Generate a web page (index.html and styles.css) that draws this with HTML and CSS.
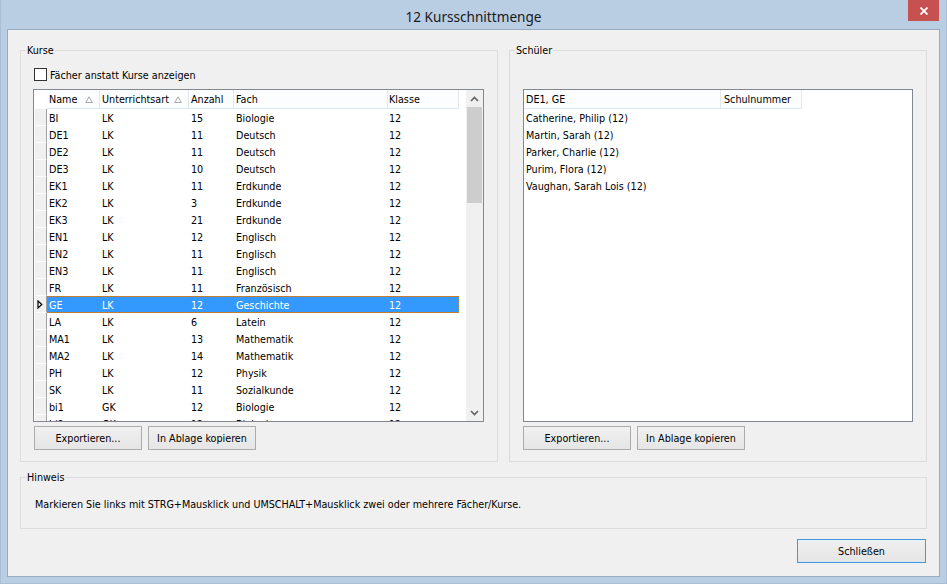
FILE: index.html
```html
<!DOCTYPE html>
<html lang="de">
<head>
<meta charset="utf-8">
<title>12 Kursschnittmenge</title>
<link rel="stylesheet" href="styles.css">
</head>
<body>
<div class="window">
  <div class="titlebar">
    <span class="title">12 Kursschnittmenge</span>
    <div class="close"><svg width="8" height="8" viewBox="0 0 8 8"><path d="M0.5 0.5 L7.5 7.5 M7.5 0.5 L0.5 7.5" stroke="#fff" stroke-width="1.8" fill="none"/></svg></div>
  </div>
  <div class="client">
    <div class="groups">
      <div class="group kurse">
        <div class="group-title">Kurse</div>
        <div class="group-body">
          <label class="check"><span class="box"></span><span class="check-label">Fächer anstatt Kurse anzeigen</span></label>
          <div class="grid">
            <div class="grid-body">
              <div class="hdr">
                <div class="ind-h"></div>
                <div class="hc c-name">Name<svg class="sort" width="8" height="7" viewBox="0 0 8 7"><path d="M4 0.8 L7.3 6.5 L0.7 6.5 Z" fill="none" stroke="#a8a8a8" stroke-width="1"/></svg></div>
                <div class="hc c-art">Unterrichtsart<svg class="sort" width="8" height="7" viewBox="0 0 8 7"><path d="M4 0.8 L7.3 6.5 L0.7 6.5 Z" fill="none" stroke="#a8a8a8" stroke-width="1"/></svg></div>
                <div class="hc c-anz">Anzahl</div>
                <div class="hc c-fach">Fach</div>
                <div class="hc c-kl">Klasse</div>
              </div>
              <div class="row"><div class="ind"></div><div class="cells"><div class="c c-name">BI</div><div class="c c-art">LK</div><div class="c c-anz">15</div><div class="c c-fach">Biologie</div><div class="c c-kl">12</div></div></div>
              <div class="row"><div class="ind"></div><div class="cells"><div class="c c-name">DE1</div><div class="c c-art">LK</div><div class="c c-anz">11</div><div class="c c-fach">Deutsch</div><div class="c c-kl">12</div></div></div>
              <div class="row"><div class="ind"></div><div class="cells"><div class="c c-name">DE2</div><div class="c c-art">LK</div><div class="c c-anz">11</div><div class="c c-fach">Deutsch</div><div class="c c-kl">12</div></div></div>
              <div class="row"><div class="ind"></div><div class="cells"><div class="c c-name">DE3</div><div class="c c-art">LK</div><div class="c c-anz">10</div><div class="c c-fach">Deutsch</div><div class="c c-kl">12</div></div></div>
              <div class="row"><div class="ind"></div><div class="cells"><div class="c c-name">EK1</div><div class="c c-art">LK</div><div class="c c-anz">11</div><div class="c c-fach">Erdkunde</div><div class="c c-kl">12</div></div></div>
              <div class="row"><div class="ind"></div><div class="cells"><div class="c c-name">EK2</div><div class="c c-art">LK</div><div class="c c-anz">3</div><div class="c c-fach">Erdkunde</div><div class="c c-kl">12</div></div></div>
              <div class="row"><div class="ind"></div><div class="cells"><div class="c c-name">EK3</div><div class="c c-art">LK</div><div class="c c-anz">21</div><div class="c c-fach">Erdkunde</div><div class="c c-kl">12</div></div></div>
              <div class="row"><div class="ind"></div><div class="cells"><div class="c c-name">EN1</div><div class="c c-art">LK</div><div class="c c-anz">12</div><div class="c c-fach">Englisch</div><div class="c c-kl">12</div></div></div>
              <div class="row"><div class="ind"></div><div class="cells"><div class="c c-name">EN2</div><div class="c c-art">LK</div><div class="c c-anz">11</div><div class="c c-fach">Englisch</div><div class="c c-kl">12</div></div></div>
              <div class="row"><div class="ind"></div><div class="cells"><div class="c c-name">EN3</div><div class="c c-art">LK</div><div class="c c-anz">11</div><div class="c c-fach">Englisch</div><div class="c c-kl">12</div></div></div>
              <div class="row"><div class="ind"></div><div class="cells"><div class="c c-name">FR</div><div class="c c-art">LK</div><div class="c c-anz">11</div><div class="c c-fach">Französisch</div><div class="c c-kl">12</div></div></div>
              <div class="row selected"><div class="ind"><svg width="6" height="9" viewBox="0 0 6 9"><path d="M1 1 L4.8 4.5 L1 8 Z" fill="#fff" stroke="#000" stroke-width="1.2"/></svg></div><div class="cells"><div class="c c-name">GE</div><div class="c c-art">LK</div><div class="c c-anz">12</div><div class="c c-fach">Geschichte</div><div class="c c-kl">12</div></div></div>
              <div class="row"><div class="ind"></div><div class="cells"><div class="c c-name">LA</div><div class="c c-art">LK</div><div class="c c-anz">6</div><div class="c c-fach">Latein</div><div class="c c-kl">12</div></div></div>
              <div class="row"><div class="ind"></div><div class="cells"><div class="c c-name">MA1</div><div class="c c-art">LK</div><div class="c c-anz">13</div><div class="c c-fach">Mathematik</div><div class="c c-kl">12</div></div></div>
              <div class="row"><div class="ind"></div><div class="cells"><div class="c c-name">MA2</div><div class="c c-art">LK</div><div class="c c-anz">14</div><div class="c c-fach">Mathematik</div><div class="c c-kl">12</div></div></div>
              <div class="row"><div class="ind"></div><div class="cells"><div class="c c-name">PH</div><div class="c c-art">LK</div><div class="c c-anz">12</div><div class="c c-fach">Physik</div><div class="c c-kl">12</div></div></div>
              <div class="row"><div class="ind"></div><div class="cells"><div class="c c-name">SK</div><div class="c c-art">LK</div><div class="c c-anz">11</div><div class="c c-fach">Sozialkunde</div><div class="c c-kl">12</div></div></div>
              <div class="row"><div class="ind"></div><div class="cells"><div class="c c-name">bi1</div><div class="c c-art">GK</div><div class="c c-anz">12</div><div class="c c-fach">Biologie</div><div class="c c-kl">12</div></div></div>
              <div class="row"><div class="ind"></div><div class="cells"><div class="c c-name">bi2</div><div class="c c-art">GK</div><div class="c c-anz">12</div><div class="c c-fach">Biologie</div><div class="c c-kl">12</div></div></div>
            </div>
            <div class="vscroll">
              <div class="arrow"><svg width="9" height="6" viewBox="0 0 9 6"><path d="M1 5 L4.5 1.5 L8 5" fill="none" stroke="#606060" stroke-width="1.6"/></svg></div>
              <div class="track"><div class="thumb"></div></div>
              <div class="arrow"><svg width="9" height="6" viewBox="0 0 9 6"><path d="M1 1 L4.5 4.5 L8 1" fill="none" stroke="#606060" stroke-width="1.6"/></svg></div>
            </div>
          </div>
          <div class="buttons">
            <button class="btn">Exportieren...</button>
            <button class="btn">In Ablage kopieren</button>
          </div>
        </div>
      </div>
      <div class="group schueler">
        <div class="group-title">Schüler</div>
        <div class="group-body">
          <div class="list">
            <div class="lhdr"><div class="hc l-name">DE1, GE</div><div class="hc l-nr">Schulnummer</div></div>
            <div class="lrow">Catherine, Philip (12)</div>
            <div class="lrow">Martin, Sarah (12)</div>
            <div class="lrow">Parker, Charlie (12)</div>
            <div class="lrow">Purim, Flora (12)</div>
            <div class="lrow">Vaughan, Sarah Lois (12)</div>
          </div>
          <div class="buttons">
            <button class="btn">Exportieren...</button>
            <button class="btn">In Ablage kopieren</button>
          </div>
        </div>
      </div>
    </div>
    <div class="group hinweis">
      <div class="group-title">Hinweis</div>
      <p class="hint">Markieren Sie links mit STRG+Mausklick und UMSCHALT+Mausklick zwei oder mehrere Fächer/Kurse.</p>
    </div>
    <div class="footer">
      <button class="btn default">Schließen</button>
    </div>
  </div>
</div>
</body>
</html>
```

FILE: styles.css
```css
* { box-sizing: border-box; }
html, body { margin: 0; padding: 0; }
body {
  width: 947px;
  height: 584px;
  overflow: hidden;
  font-family: "DejaVu Sans Condensed", "Liberation Sans", Arial, sans-serif;
  font-stretch: condensed;
  font-size: 10.7px;
  color: #000;
  background: #b9cde3;
}
.window {
  width: 947px;
  height: 584px;
  border: 1px solid #a9bdd4;
  border-top: 0;
  display: flex;
  flex-direction: column;
}
.titlebar {
  position: relative;
  height: 29px;
  display: flex;
  align-items: center;
  justify-content: center;
}
.title {
  font-family: "Noto Sans", "Open Sans", sans-serif;
  font-stretch: normal;
  font-size: 13.6px;
  color: #1a1a1a;
  margin-top: 3px;
}
.close {
  position: absolute;
  top: 0;
  right: 7px;
  width: 31px;
  height: 21px;
  background: #c75050;
  display: flex;
  align-items: center;
  justify-content: center;
}
.client {
  margin: 0 6px;
  height: 548px;
  border: 1px solid #98abc2;
  background: #f0f0f0;
  display: flex;
  flex-direction: column;
  padding: 0 12px;
}
.groups {
  display: flex;
  gap: 11px;
  margin-top: 20px;
}
.group {
  border: 1px solid #dcdcdc;
  display: flex;
  flex-direction: column;
}
.group-title {
  align-self: flex-start;
  margin: -7px 0 0 5px;
  padding: 0 1px;
  line-height: 13px;
  background: #f0f0f0;
}
.group-body {
  display: flex;
  flex-direction: column;
}
.kurse {
  width: 478px;
  height: 412px;
}
.kurse .group-body { padding: 0 13px 0 12px; }
.schueler {
  width: 418px;
  height: 412px;
}
.schueler .group-body { padding: 0 12px 0 13px; }
.check {
  display: flex;
  align-items: center;
  height: 13px;
  margin: 11px 0 0 1px;
  line-height: 13px;
}
.check-label { padding-top: 2px; }
.check .box {
  width: 13px;
  height: 13px;
  border: 1px solid #333;
  background: #fff;
  margin-right: 3px;
}
.grid {
  margin-top: 8px;
  width: 451px;
  height: 333px;
  border: 1px solid #828790;
  background: #fff;
  display: flex;
}
.grid-body {
  flex: 1;
  overflow: hidden;
}
.hdr, .lhdr {
  display: flex;
  height: 19px;
}
.hc {
  height: 19px;
  line-height: 16px;
  padding-top: 2px;
  padding-left: 2px;
  background: #fcfdfe;
  border-right: 1px solid #e3e8f0;
  border-bottom: 1px solid #dfe7f1;
  white-space: nowrap;
  overflow: hidden;
  display: flex;
  align-items: center;
}
.ind-h {
  width: 13px;
  height: 19px;
  background: #fff;
}
.hc .sort { margin-left: auto; margin-right: 6px; flex: none; margin-top: -2px; }
.c-name { width: 53px; }
.c-art { width: 89px; }
.c-anz { width: 45px; }
.c-fach { width: 154px; }
.c-kl { width: 71px; }
.row {
  display: flex;
  height: 17px;
}
.ind {
  width: 13px;
  height: 17px;
  background: #f0f0f0;
  border-left: 1px solid #fff;
  border-right: 1px solid #a0a0a0;
  border-bottom: 1px solid #fbfbfb;
  display: flex;
  align-items: center;
  padding-left: 2px;
}
.cells {
  display: flex;
  height: 17px;
  line-height: 17px;
}
.c {
  padding: 1px 0 0 2px;
  white-space: nowrap;
}
.row .c-kl { padding-left: 1px; }
.hdr .c-kl { padding-left: 1px; }
.selected .cells {
  background: #3399ff;
  color: #fff;
  outline: 1px dotted #c8802e;
  outline-offset: -1px;
}
.vscroll {
  width: 17px;
  background: #f0f0f0;
  display: flex;
  flex-direction: column;
}
.arrow {
  height: 17px;
  display: flex;
  align-items: center;
  justify-content: center;
}
.track {
  flex: 1;
  padding: 0 1px;
}
.thumb {
  height: 96px;
  background: #cdcdcd;
}
.buttons {
  display: flex;
  gap: 6px;
  margin: 4px 0 0 1px;
}
.btn {
  font-family: "DejaVu Sans Condensed", "Liberation Sans", Arial, sans-serif;
  font-stretch: condensed;
  font-size: 10.7px;
  color: #000;
  width: 108px;
  height: 24px;
  padding: 0;
  border: 1px solid #acacac;
  background: linear-gradient(#f0f0f0, #e5e5e5);
  border-radius: 0;
}
.list {
  margin-top: 32px;
  width: 390px;
  height: 333px;
  border: 1px solid #828790;
  background: #fff;
}
.l-name { width: 197px; }
.l-nr { width: 81px; padding-left: 3px; }
.lrow {
  height: 17px;
  line-height: 17px;
  padding: 1px 0 0 2px;
}
.schueler .buttons { margin-left: 0; }
.hinweis {
  margin-top: 15px;
  height: 52px;
}
.hint {
  margin: 14px 0 0 14px;
  line-height: 13px;
}
.footer {
  display: flex;
  justify-content: flex-end;
  margin-top: 10px;
  padding-right: 1px;
}
.default {
  width: 129px;
  height: 24px;
  border: 1px solid #3c99e6;
}
```
